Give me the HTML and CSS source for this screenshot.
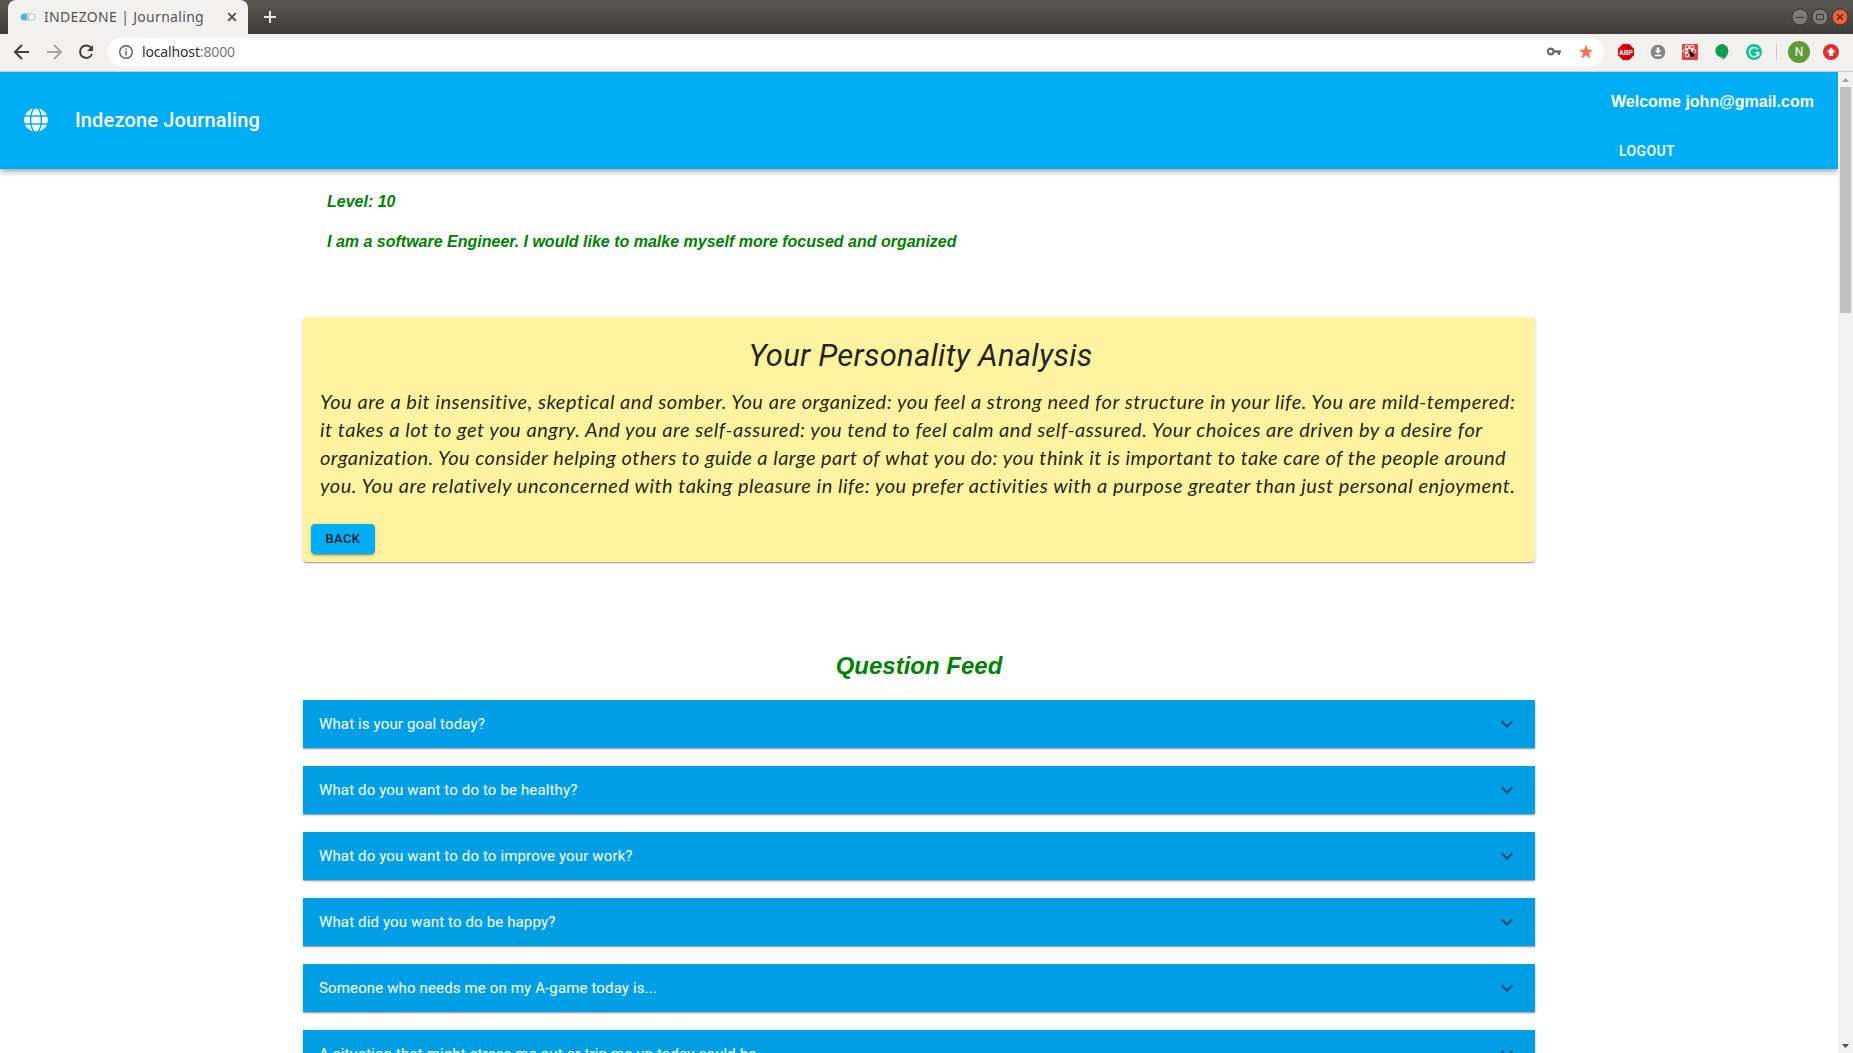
FILE: index.html
```html
<!DOCTYPE html>
<html lang="en">
<head>
<meta charset="utf-8">
<title>INDEZONE | Journaling</title>
<link rel="stylesheet" href="styles.css">
</head>
<body>
<div class="tabstrip">
  <div class="tab">
    <svg class="favicon" width="16" height="16" viewBox="0 0 16 16"><path d="M4 4.500h3.500v7H4a3.500 3.500 0 0 1 0-7z" fill="#57b3e6"/><path d="M7 4.500h2v7H7z" fill="#f8df62"/><path d="M9 5h3.200a3 3 0 0 1 0 6H9z" fill="#fff" stroke="#8cc9ec"/></svg>
    <span class="tab-title">INDEZONE | Journaling</span>
    <svg class="tab-close" width="10" height="10" viewBox="0 0 10 10"><path d="M1.200 1.200l7.600 7.600M8.800 1.200l-7.600 7.600" stroke="#4a4a4a" stroke-width="1.800"/></svg>
  </div>
  <svg class="new-tab" width="12" height="12" viewBox="0 0 12 12"><path d="M6 0v12M0 6h12" stroke="#e8e7e3" stroke-width="2"/></svg>
  <div class="window-buttons">
    <svg width="18" height="18" viewBox="0 0 18 18"><circle cx="9" cy="9" r="8" fill="#7d7b75" stroke="#35342f"/><path d="M5 9.500h8" stroke="#3b3a36"/></svg>
    <svg width="18" height="18" viewBox="0 0 18 18"><circle cx="9" cy="9" r="8" fill="#7d7b75" stroke="#35342f"/><path d="M5.500 6.500h7v5h-7z" fill="none" stroke="#3b3a36"/></svg>
    <svg width="18" height="18" viewBox="0 0 18 18"><circle cx="9" cy="9" r="8" fill="#f1603b" stroke="#35342f"/><path d="M6.200 6.200l5.600 5.600M11.800 6.200l-5.600 5.600" stroke="#4a2a1d" stroke-width="1.300"/></svg>
  </div>
</div>
<div class="toolbar">
  <svg class="nav" width="24" height="24" viewBox="0 0 24 24"><path d="M19 12H6M12 5l-7 7 7 7" fill="none" stroke="#3f3f3f" stroke-width="2"/></svg>
  <svg class="nav" width="24" height="24" viewBox="0 0 24 24"><path d="M5 12h13M12 5l7 7-7 7" fill="none" stroke="#a8a7a5" stroke-width="2"/></svg>
  <svg class="nav" width="24" height="24" viewBox="0 0 24 24"><path d="M17.200 8A6.200 6.200 0 1 0 18 14" fill="none" stroke="#3f3f3f" stroke-width="2"/><path d="M19 5v6h-6z" fill="#3f3f3f"/></svg>
  <div class="omnibox">
    <svg width="16" height="16" viewBox="0 0 16 16"><circle cx="8" cy="8" r="6.300" fill="none" stroke="#5a5a5a" stroke-width="1.400"/><path d="M8 7.300v4.200M8 4.500v1.600" stroke="#5a5a5a" stroke-width="1.500"/></svg>
    <span class="url">localhost<span class="port">:8000</span></span>
    <svg class="key" width="16" height="16" viewBox="0 0 16 16"><circle cx="4.700" cy="7.500" r="2.900" fill="none" stroke="#6a6a6a" stroke-width="2.200"/><path d="M8 7.500h7M12.800 7.500v3.600" stroke="#6a6a6a" stroke-width="2.400"/></svg>
    <svg class="star" width="16" height="16" viewBox="0 0 16 16"><path d="M8 .8l2 5h5.200l-4.200 3.300 1.600 5.300L8 11.200l-4.600 3.200L5 9.100.8 5.800H6z" fill="#f9744b"/></svg>
  </div>
  <div class="extensions">
    <svg class="adblock" width="16" height="16" viewBox="0 0 16 16"><path d="M4.700 0h6.600L16 4.700v6.600L11.300 16H4.700L0 11.300V4.700z" fill="#d8000f"/><text x="8" y="11" class="abp" text-anchor="middle" textLength="14" lengthAdjust="spacingAndGlyphs">ABP</text></svg>
    <svg width="16" height="16" viewBox="0 0 16 16"><circle cx="8" cy="8" r="7.300" fill="#858585"/><path d="M6.800 3.500h2.400v3h2L8 9.700 4.800 6.500h2zM4.800 10.800h6.400v1.500H4.800z" fill="#fff"/></svg>
    <svg width="16" height="16" viewBox="0 0 16 16"><path d="M0 0h16v16H0z" fill="#e0433c"/><g fill="none" stroke="#fff"><ellipse cx="7.500" cy="7" rx="6.500" ry="2.500"/><ellipse cx="7.500" cy="7" rx="6.500" ry="2.500" transform="rotate(60 7.500 7)"/><ellipse cx="7.500" cy="7" rx="6.500" ry="2.500" transform="rotate(120 7.500 7)"/></g><ellipse cx="9.700" cy="10.500" rx="2" ry="2.800" transform="rotate(-35 9.700 10.500)" fill="#171717"/><path d="M6.500 9l6 3M7.500 13l4.500-5M8.500 8l-1-1.500" stroke="#171717" stroke-width=".8"/></svg>
    <svg width="16" height="16" viewBox="0 0 16 16"><path d="M7.700 0a6.700 6.700 0 0 1 6.700 6.700C14.400 11 11.600 14 8.500 15.800v-2.400A6.700 6.700 0 1 1 7.700 0z" fill="#0f9d58"/></svg>
    <svg width="16" height="16" viewBox="0 0 16 16"><circle cx="8" cy="8" r="8" fill="#15c39a"/><path d="M11.600 5.200a4.600 4.600 0 1 0 1 3.500H9.300M12.600 8.700v3" fill="none" stroke="#fff" stroke-width="1.400"/></svg>
  </div>
  <div class="divider"></div>
  <div class="avatar">N</div>
  <svg class="update" width="16" height="16" viewBox="0 0 16 16"><circle cx="8" cy="8" r="8" fill="#e12d2b"/><path d="M8 3.500l4.500 4.700H10V12H6V8.200H3.500z" fill="#fff"/></svg>
</div>
<div class="viewport">
  <div class="page">
    <header class="appbar">
      <svg class="globe" width="24" height="24" viewBox="0 0 24 24"><circle cx="12" cy="12" r="11.800" fill="#fff"/><g fill="none" stroke="#00acf3" stroke-width="1.500"><ellipse cx="12" cy="12" rx="5.400" ry="12.300"/><path d="M0 8.100h24M0 15.900h24"/></g></svg>
      <h1 class="brand">Indezone Journaling</h1>
      <div class="user">
        <p class="welcome">Welcome john@gmail.com</p>
        <button class="logout">LOGOUT</button>
      </div>
    </header>
    <main class="container">
      <section class="profile">
        <p>Level: 10</p>
        <p>I am a software Engineer. I would like to malke myself more focused and organized</p>
      </section>
      <section class="card">
        <h2>Your Personality Analysis</h2>
        <p class="analysis">
          <span class="line l1">You are a bit insensitive, skeptical and somber. You are organized: you feel a strong need for structure in your life. You are mild-tempered:</span>
          <span class="line l2">it takes a lot to get you angry. And you are self-assured: you tend to feel calm and self-assured. Your choices are driven by a desire for</span>
          <span class="line l3">organization. You consider helping others to guide a large part of what you do: you think it is important to take care of the people around</span>
          <span class="line l4">you. You are relatively unconcerned with taking pleasure in life: you prefer activities with a purpose greater than just personal enjoyment.</span>
        </p>
        <button class="back">BACK</button>
      </section>
      <h2 class="feed-title">Question Feed</h2>
      <section class="feed">
        <div class="panel"><span>What is your goal today?</span><svg width="24" height="24" viewBox="0 0 24 24"><path d="M16.590 8.590L12 13.170 7.410 8.590 6 10l6 6 6-6z"/></svg></div>
        <div class="panel"><span>What do you want to do to be healthy?</span><svg width="24" height="24" viewBox="0 0 24 24"><path d="M16.590 8.590L12 13.170 7.410 8.590 6 10l6 6 6-6z"/></svg></div>
        <div class="panel"><span>What do you want to do to improve your work?</span><svg width="24" height="24" viewBox="0 0 24 24"><path d="M16.590 8.590L12 13.170 7.410 8.590 6 10l6 6 6-6z"/></svg></div>
        <div class="panel"><span>What did you want to do be happy?</span><svg width="24" height="24" viewBox="0 0 24 24"><path d="M16.590 8.590L12 13.170 7.410 8.590 6 10l6 6 6-6z"/></svg></div>
        <div class="panel"><span>Someone who needs me on my A-game today is...</span><svg width="24" height="24" viewBox="0 0 24 24"><path d="M16.590 8.590L12 13.170 7.410 8.590 6 10l6 6 6-6z"/></svg></div>
        <div class="panel"><span>A situation that might stress me out or trip me up today could be...</span><svg width="24" height="24" viewBox="0 0 24 24"><path d="M16.590 8.590L12 13.170 7.410 8.590 6 10l6 6 6-6z"/></svg></div>
      </section>
    </main>
  </div>
  <div class="scrollbar">
    <svg width="15" height="15" viewBox="0 0 15 15"><path d="M4 10l3.500-4 3.500 4z" fill="#a3a3a3"/></svg>
    <div class="thumb"></div>
    <svg class="down" width="15" height="15" viewBox="0 0 15 15"><path d="M4 6l3.500 4L11 6z" fill="#505050"/></svg>
  </div>
</div>
</body>
</html>
```
FILE: styles.css
```css
* { box-sizing: border-box; }
body { margin: 0; height: 1053px; overflow: hidden; display: flex; flex-direction: column; background: #fff; font-family: Roboto, sans-serif; }
h1, h2, p { margin: 0; }
button { border: 0; background: none; font-family: inherit; }
svg { display: block; flex: none; }

.tabstrip { height: 34px; flex: none; display: flex; align-items: center; padding: 0 4px 0 8px; background: linear-gradient(#5b5952, #3d3c38); }
.tab { width: 240px; height: 34px; display: flex; align-items: center; padding: 0 11px 0 12px; border-radius: 8px 8px 0 0; background: #f2f1f0; }
.tab-title { flex: 1; margin: -2px 0 0 8px; font: 14px "Noto Sans", sans-serif; letter-spacing: .32px; color: #555; white-space: nowrap; }
.new-tab { margin-left: 16px; }
.window-buttons { margin-left: auto; display: flex; gap: 2px; }

.toolbar { height: 38px; flex: none; display: flex; align-items: center; padding: 0 13px 1px 10px; background: #f2f1f0; border-bottom: 1px solid #cfcecd; }
.nav { margin-right: 8px; }
.omnibox { width: 1496px; height: 28px; display: flex; align-items: center; padding: 0 10px; border-radius: 14px; background: #fff; margin-left: 2px; }
.url { margin: -2px 0 0 8px; font: 14px "Noto Sans", sans-serif; letter-spacing: -.15px; color: #303030; }
.port { color: #777; }
.key { margin-left: auto; }
.star { margin-left: 16px; }
.extensions { display: flex; gap: 16px; margin-left: 14px; }
.adblock { overflow: visible; }
.abp { font: bold 8px "Liberation Sans", sans-serif; fill: #fff; }
.divider { width: 1px; height: 16px; margin-left: 14px; background: #cbcac9; }
.avatar { width: 22px; height: 22px; margin-left: 11px; border-radius: 50%; background: #5f9b37; color: #fff; font-size: 12px; line-height: 22px; text-align: center; }
.update { margin-left: 13px; }

.viewport { flex: 1; min-height: 0; display: flex; }
.page { flex: 1; overflow: hidden; }
.appbar { height: 97px; display: flex; align-items: center; padding: 0 24px 1px; background: #00acf3; color: #fff; box-shadow: 0 2px 4px -1px rgba(0,0,0,.2), 0 4px 5px rgba(0,0,0,.14), 0 1px 10px rgba(0,0,0,.12); }
.brand { margin-left: 27px; font-size: 20px; font-weight: 500; letter-spacing: .15px; line-height: 32px; }
.user { margin-left: auto; width: 203px; align-self: stretch; padding-top: 21px; }
.welcome { font: bold 16px/18px "Liberation Sans", sans-serif; white-space: nowrap; }
.logout { display: block; margin-top: 22px; padding: 6px 8px; font-size: 14px; font-weight: 500; line-height: 24px; letter-spacing: .4px; color: #fff; }

.container { width: 1232px; margin: 0 auto; }
.profile { height: 148px; padding: 24px 24px 0; font: italic bold 16px/18px "Liberation Sans", sans-serif; color: green; }
.profile p + p { margin-top: 22px; }
.card { height: 245px; padding: 18px 8px 8px; border-radius: 4px; background: #fff2a0; color: rgba(0,0,0,.87); box-shadow: 0 1px 3px rgba(0,0,0,.2), 0 1px 1px rgba(0,0,0,.14), 0 2px 1px -1px rgba(0,0,0,.12); }
.card h2 { padding-left: 3px; font-size: 31px; font-style: italic; font-weight: 400; line-height: 42px; letter-spacing: .24px; text-align: center; }
.analysis { margin: 10px 8px 0 9px; font: italic 20px/28px Lato, sans-serif; font-variant-ligatures: none; }
.line { display: block; width: max-content; white-space: nowrap; }
.l1 { letter-spacing: .52px; }
.l2 { letter-spacing: .52px; }
.l3 { letter-spacing: .46px; }
.l4 { letter-spacing: .5px; }
.back { display: block; width: 64px; height: 30px; margin-top: 25px; padding: 0; border-radius: 4px; background: #00acf3; color: rgba(0,0,0,.87); font-size: 13px; font-weight: 500; line-height: 30px; letter-spacing: .37px; box-shadow: 0 3px 1px -2px rgba(0,0,0,.2), 0 2px 2px rgba(0,0,0,.14), 0 1px 5px rgba(0,0,0,.12); }
.feed-title { margin: 90px 0 20px; font: italic bold 24px/28px "Liberation Sans", sans-serif; color: green; text-align: center; }
.feed { display: grid; gap: 18px; }
.panel { height: 48px; display: flex; align-items: center; justify-content: space-between; padding: 0 16px; background: #009fe5; color: #fff; font-size: 15px; letter-spacing: .14px; box-shadow: 0 1px 3px rgba(0,0,0,.2), 0 1px 1px rgba(0,0,0,.14), 0 2px 1px -1px rgba(0,0,0,.12); }
.panel svg { fill: rgba(0,0,0,.54); }

.scrollbar { width: 15px; display: flex; flex-direction: column; align-items: center; background: #f1f1f1; }
.thumb { width: 11px; height: 226px; background: #c1c1c1; }
.down { margin-top: auto; }
```
